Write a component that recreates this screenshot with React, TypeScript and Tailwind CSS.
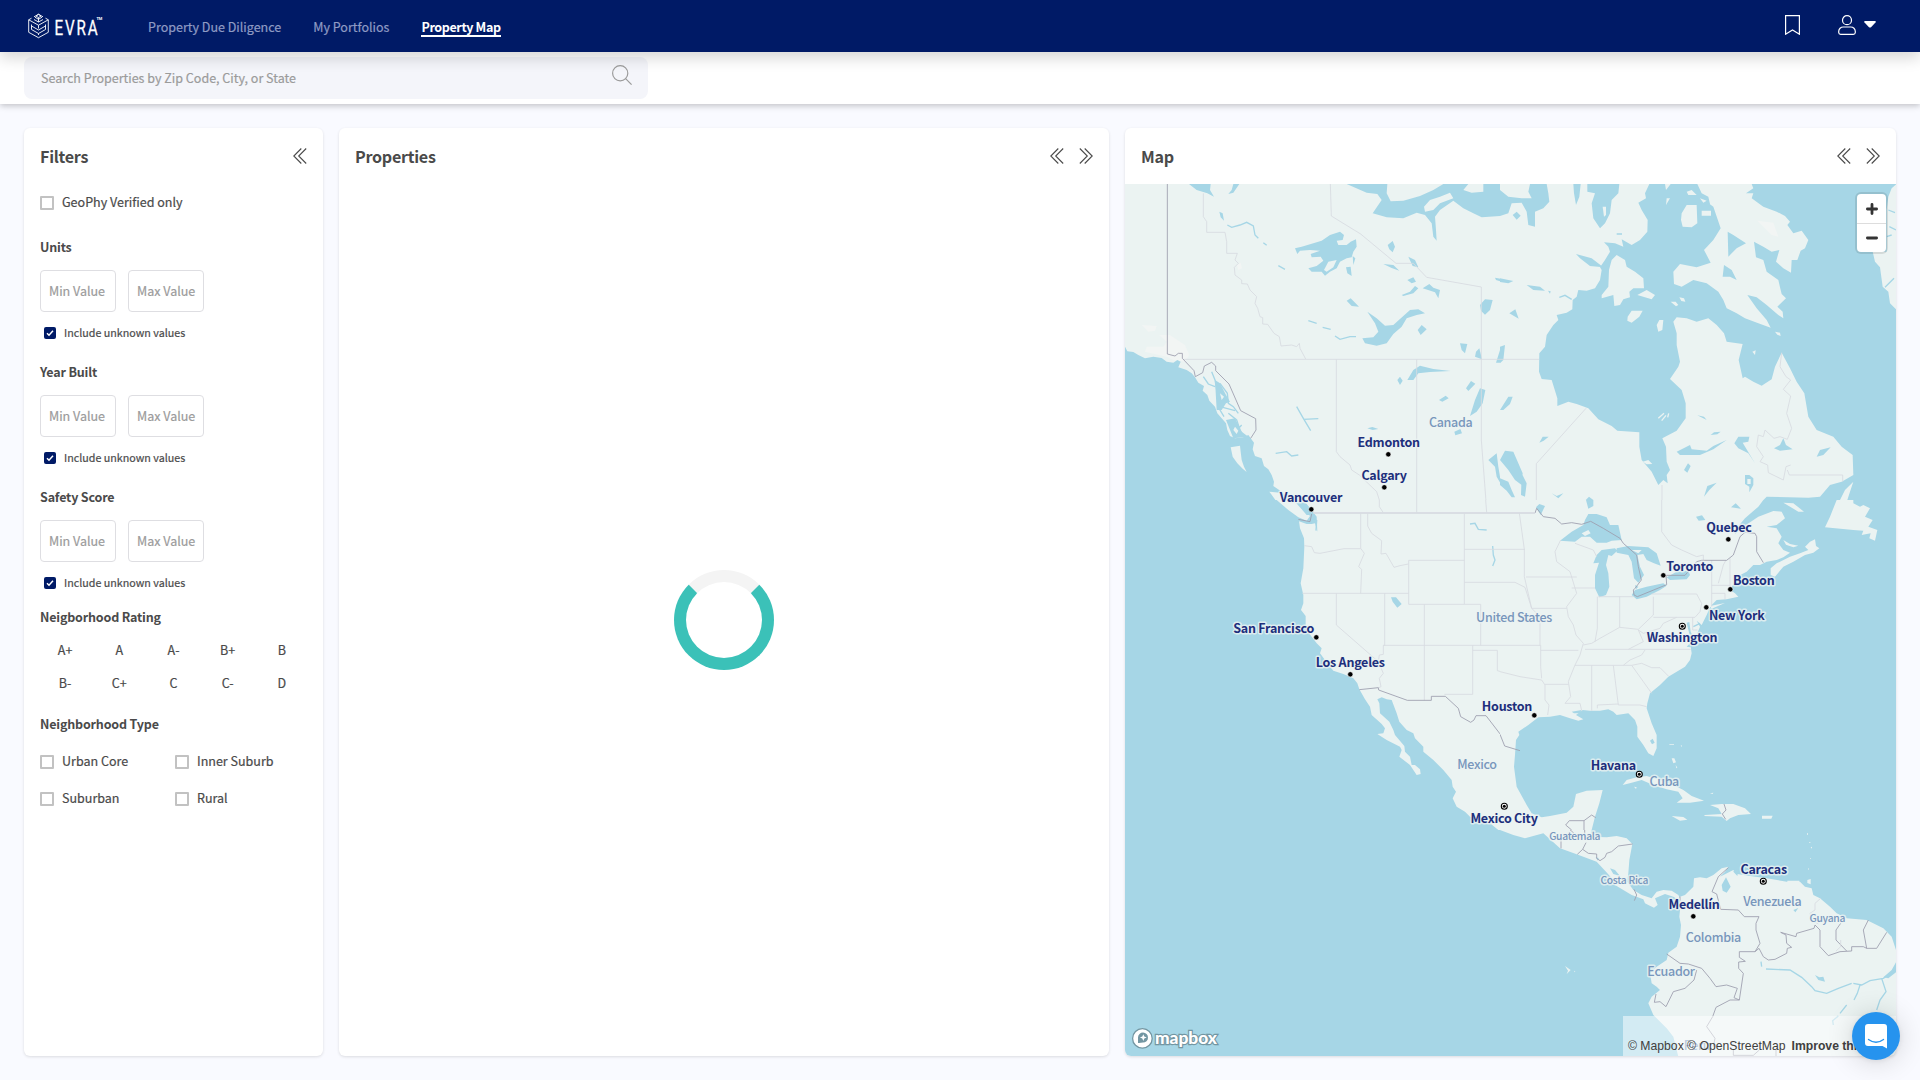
import React from "react";

type Kind = "land" | "water" | "glacier" | "stroke" | "landStroke" | "border" | "state";
type Shape = [Kind, string];

const layerClass: Record<Kind, string> = {
  land: "fill-[#ebf3f2]",
  water: "fill-[#a6d6e6]",
  glacier: "fill-[#f2f5f4]",
  stroke: "fill-none stroke-[#a6d6e6] stroke-[4]",
  landStroke: "fill-none stroke-[#ebf3f2] stroke-[4]",
  border: "fill-none stroke-[#9c9eae] stroke-[2.6]",
  state: "fill-none stroke-[#d8dbe1] stroke-[2.6]",
};

const northWest: Shape[] = [
  ["glacier", "M65 435L110 438 105 452 85 455ZM117 465L150 465 195 495 208 525 195 545 160 540 140 530 75 515 80 500 130 500 140 485ZM350 255L362 248 366 265 355 270Z"],
  ["water", "M0 500L15 500 22 514 40 516 55 525 75 535 100 530 125 534 140 545 160 548 172 540 182 545 175 562 200 570 215 580 225 592 235 608 252 618 248 632 262 645 268 662 285 680 292 700 305 715 318 730 322 750 330 768 345 775 370 772 385 765 402 788 398 808 405 828 425 835 432 858 445 868 455 885 462 905 460 918 485 935 500 950 530 970 560 990 0 990Z"],
  ["stroke", "M275 575L285 600 292 640 300 690 312 710M250 590L265 612 285 620M300 610L322 640 325 670 340 680 355 700M300 680L345 692M325 700L350 720 360 750 375 775M365 735L350 752M290 650L305 662"],
  ["water", "M285 600L300 610 318 645 330 665 318 670 305 690 290 690ZM318 720L345 715 365 755 385 770 340 775Z"],
  ["land", "M332 802L360 797 362 815 365 840 372 860 380 876 368 866 352 850 338 830ZM448 935L480 938 500 955 530 975 545 990 500 990 470 965ZM345 740L355 752 350 762 340 750ZM300 640L312 650 305 660Z"],
  ["water", "M207 12L230 30 262 40 282 50 270 30 272 12ZM340 12L335 30 325 42 340 38 358 12ZM298 95L308 100 312 122 302 112ZM525 205L545 200 580 190 605 182 630 165 660 155 672 165 668 180 650 182 655 195 680 195 692 185 708 178 710 200 700 215 695 232 680 235 660 245 650 265 630 275 615 287 605 275 575 275 565 265 590 258 610 242 602 230 575 232 572 222 600 212 570 210 540 212 532 222ZM678 262L692 260 695 288 682 280ZM698 228L706 235 700 255Z"],
  ["land", "M612 270L625 245 650 240 640 262 620 275Z"],
  ["water", "M680 12L740 38 772 42 785 60 758 100 800 112 850 115 890 98 915 105 935 130 940 170 950 182 948 150 945 110 960 90 1000 62 1030 85 1060 100 1085 112 1140 108 1170 106 1172 90 1200 75 1200 12Z"],
  ["land", "M802 12L970 12 940 30 900 48 850 62 812 64 800 40ZM912 80L930 60 960 50 990 38 1000 55 960 70 940 90 915 95ZM1045 12L1090 12 1090 35 1055 38 1030 30ZM1165 12L1200 12 1200 48 1185 30Z"],
  ["water", "M1175 100L1200 95 1200 117 1185 117ZM803 195L818 183 825 200 818 217 808 208ZM790 252L820 255 838 272 815 264ZM865 230L885 240 895 262 878 258ZM862 300L880 292 888 305 875 310ZM845 345L870 335 885 318 895 325 880 340 850 348ZM908 325L928 312 940 323 960 330 955 355 945 337ZM1080 375L1095 358 1118 360 1110 390 1095 404 1083 392ZM1125 293L1150 298 1180 308 1160 310 1128 300ZM1170 400L1185 390 1195 415 1180 412ZM680 362L692 355 717 380 695 378ZM742 395L770 415 795 437 820 435 850 408 870 390 895 388 915 400 890 405 860 415 845 440 820 462 800 490 770 497 735 490 727 475 760 472 775 455 765 430ZM893 450L905 435 920 448 902 465ZM1020 490L1042 492 1035 520 1025 510ZM1068 515L1078 505 1086 538 1065 530ZM1128 548L1140 510 1158 495 1146 548ZM862 600L880 570 900 557 940 567 992 573 930 576 895 580 880 600ZM832 600L840 590 848 602 840 615ZM1038 625L1053 603 1066 611 1045 633ZM957 660L977 647 986 655 967 665ZM1050 708L1065 660 1080 625 1096 630 1088 670 1070 695ZM1142 685L1160 650 1178 650 1170 675 1150 690ZM742 745L757 741 775 747 758 750ZM1003 755L1021 747 1026 760 1006 766ZM1150 820L1185 808 1200 850 1200 905 1175 870 1155 845ZM1105 840L1130 820 1135 860 1140 890 1165 905 1180 950 1165 945 1150 925 1130 890 1125 860Z"],
  ["stroke", "M322 135L335 142 360 135 380 127 400 138 405 165 415 175M430 188L440 196M475 257L495 268M565 422L590 430M608 442L632 448M645 468L660 478 690 470 708 470M530 680L550 715 572 752M550 718L595 716M467 820L500 815 515 828 535 825"],
  ["state", "M250 40V110L260 125 260 157 315 157 320 185 320 220 352 220 345 240 355 250 343 262 345 285 365 300 365 311 382 312 390 330 410 350 405 370 413 385 420 410 428 413 428 432 443 433 462 460 478 470 483 498 515 495 530 500 538 490 540 505 557 537M190 538H1200M649 538V815L660 830 690 855 695 870 718 885 770 935 778 960 785 990M890 538V990M631 12L634 108 722 162 828 250 880 250 920 292 1084 321V780L1100 990"],
  ["border", "M142 12V522L165 528 175 520 187 520 187 535 222 572 226 590 248 578 253 558 275 547 287 558 287 572 327 612 362 692 407 716 408 750 392 775"],
];

const northEast: Shape[] = [
  ["water", "M448 12L435 40 438 55 415 68 425 90 443 120 442 155 420 180 395 195 365 178 370 200 345 190 312 187 325 200 330 215 315 240 300 262 305 270 300 300 285 325 260 332 235 330 230 350 218 360 217 388 200 398 170 405 175 420 160 435 140 465 135 500 118 520 117 575 125 597 155 600 172 655 172 678 205 665 230 672 265 685 295 718 335 738 352 752 418 757 418 800 425 840 455 875 475 915 490 900 503 910 500 885 510 870 500 845 498 800 487 775 530 752 557 715 557 670 545 630 510 597 535 560 540 545 530 495 530 460 520 425 530 412 560 415 590 425 625 415 650 435 672 460 680 485 728 492 716 540 728 595 735 590 760 605 785 617 815 598 825 560 845 518 870 565 890 605 913 640 925 710 950 750 1000 770 1025 800 1058 825 1060 885 1025 905 990 915 960 950 925 953 800 950 785 965 775 990 1200 990 1200 12Z"],
  ["land", "M570 12L585 35 600 50 640 80 662 145 640 180 612 210 632 248 590 262 540 252 520 275 522 312 545 320 580 300 620 310 655 335 670 360 680 385 710 400 735 415 775 430 812 443 800 420 770 385 742 345 770 352 800 375 835 405 850 415 848 395 832 380 858 355 845 342 840 322 835 300 800 275 790 240 768 232 762 185 790 200 815 215 838 210 828 245 850 265 873 278 875 240 892 240 902 212 915 205 925 180 905 152 880 160 862 135 870 125 855 108 830 95 790 80 755 55 760 40 738 40 760 25 755 12Z"],
  ["water", "M560 12L592 12 605 40 625 50 630 72 600 75 590 50 572 45ZM683 155L700 165 738 190 710 205 685 230ZM672 255L695 270 710 300 690 290 668 290Z"],
  ["glacier", "M772 122L820 128 835 170 815 165Z"],
  ["land", "M545 100L560 75 590 75 592 130 575 142 548 140 543 120ZM605 92H633V107H605ZM350 225L375 240 380 260 405 275 430 295 432 325 400 325 388 335 390 352 370 358 360 375 343 378 340 345 305 355 305 345 325 320 327 270 335 240ZM383 410L395 392 428 392 418 410 395 428 382 422ZM470 435L478 420 490 420 487 450 475 455ZM412 345L440 330 465 345 455 358ZM512 365L527 365 535 375 528 379ZM538 352L552 355 556 365 544 363ZM825 455L840 458 842 468 832 464ZM757 515L767 511 765 525ZM428 845L445 840 457 852 440 853ZM495 12H512L498 30ZM500 55H510L498 75ZM560 35L575 30 590 45 565 45ZM600 55L620 62 610 68ZM1060 905L1050 935 1042 960 1060 978 1085 978 1095 990 1008 990 1020 960 1035 930ZM850 965L880 970 910 990 880 990ZM1190 12L1175 25 1165 50 1160 90 1160 215 1118 215 1125 245 1140 262 1148 320 1165 335 1170 370 1190 390Z"],
  ["landStroke", "M475 715L492 700M485 722L498 706M503 712L506 700"],
  ["water", "M0 30L25 50 65 55 95 55 85 35 90 12 140 12 145 40 148 65 130 85 105 95 105 140 85 135 80 95 65 68 35 70 25 100 0 108ZM38 105L50 95 62 107 50 119ZM220 12H242L238 50 228 75 222 40ZM262 12H358L355 40 335 60 330 100 315 130 300 145 280 115 275 70 285 40 262 35ZM228 222L275 235 310 262 270 258 240 235Z"],
  ["land", "M308 80H318V105L312 110Z"],
  ["water", "M0 295L40 303 25 310 0 306ZM80 315L120 320 135 332 100 330ZM144 332L152 334 150 341ZM28 400L46 388 56 416ZM0 500L15 495 10 540 0 550ZM0 690L25 650 38 650 30 672 10 690ZM118 788L128 770 146 770 131 782ZM0 840L15 812 40 815 55 850 68 880 65 915 45 900 25 870ZM65 880L80 910 75 950 63 945ZM0 895L25 905 35 930 45 952 35 952 20 932 0 915ZM155 940L170 948 190 940 175 955ZM255 962L267 950 280 960 280 980 258 985ZM112 985L120 967 140 982 120 990ZM530 815L570 795 575 808 620 812 640 798 680 780 640 808 600 825 540 825ZM592 706L612 710 620 720ZM632 765L642 757 662 755 652 763ZM703 790L715 770 748 770 745 785 728 788 765 850 745 820 715 805ZM822 805L840 795 850 775 858 795 878 808 840 812ZM950 830L960 810 992 802 970 825ZM552 870L564 850 572 858 562 878ZM612 950L622 918 650 908 628 930ZM693 975L708 965 723 985 693 985ZM735 885H748L760 895V915L748 937V920L735 912Z"],
  ["land", "M742 897H752V912H742Z"],
  ["stroke", "M178 352L195 346 215 358M350 162H366M1155 322L1182 295M1165 90L1185 98M1160 170L1175 165M1168 140L1188 150"],
  ["state", "M0 538H117M258 685L109 851V990M486 915V990M845 518L840 560 858 590 872 600 850 628 872 648 860 700 875 745 862 778 840 770 822 775 795 750 790 770 775 765 770 800 790 830 780 845 803 855 805 878 850 900 858 860 872 855M862 870L868 885H1028V905"],
];

const southWest: Shape[] = [
  ["land", "M540 0L560 12 575 30 590 50 592 95 585 70 575 72 560 72 537 64 540 85 552 115 553 140 550 205 542 250 550 285 550 310 543 330 557 348 557 385 575 410 590 430 605 445 600 460 622 490 640 512 670 522 700 535 712 550 718 568 735 598 750 620 755 645 785 672 795 685 790 700 772 702 800 720 840 740 845 750 838 770 870 795 890 825 902 822 900 808 885 795 875 795 870 770 855 755 853 738 825 705 820 690 808 665 780 640 778 610 772 598 785 592 800 598 815 600 830 640 838 665 860 690 880 700 885 715 910 740 910 755 940 780 970 810 995 840 998 860 1008 875 998 895 1010 920 1035 935 1050 950 1110 970 1135 990 1200 990 1200 890 1190 870 1182 830 1185 770 1200 760V0ZM470 0H530L545 20 570 48 560 62 535 52 505 30Z"],
  ["water", "M1185 710L1200 707V747L1190 735ZM813 292L828 292 845 312 832 323 818 305ZM528 8L548 12 565 35 575 45 560 45Z"],
  ["stroke", "M1050 72L1065 70 1075 88 1100 90M1118 138L1120 165 1125 180 1118 198M575 60L590 62 588 92"],
  ["state", "M722 40V145L733 160 716 200 725 208 722 280M553 137L575 140 583 158 600 160 672 146H722M547 280H866M743 40V78L755 100 785 122 783 162 798 160 822 202 840 197 865 192M866 313V181H1033M1033 40V313H866M1033 148H1200M1033 247H1165L1180 255H1200M649 280V375L775 485M794 280V436H790V463L778 465 775 485 790 520 778 535 783 560 776 563M913 313V601M790 436H1200M1033 313H1082V436M1058 436V583H973M1058 451H1132V512L1160 520 1180 525 1200 527M778 0V20L790 38M890 0V38M1097 0L1100 38"],
  ["border", "M535 58L570 65 575 42M718 569L775 563 776 570 862 601H934V589H976L1015 625 1022 650 1052 667 1062 660 1068 647H1098L1145 708 1154 738 1190 752H1200"],
  ["state", "M580 38H1200M580 39H1200M580 40H1200"],
];

const southEast: Shape[] = [
  ["land", "M0 0H790L775 20 735 55 718 75 700 100 715 90 738 75 775 50 820 33 845 35 855 55 830 75 800 80 830 85 845 110 835 130 850 150 870 158 850 172 830 180 800 185 780 195 760 195 740 215 715 228 708 240 690 270 705 280 715 290 680 298 650 300 632 318 620 345 605 375 590 362 600 380 590 405 570 425 575 460 570 480 555 500 530 515 505 530 480 555 450 580 442 610 440 625 455 670 470 705 470 745 460 768 445 760 430 735 412 710 412 680 405 660 385 640 350 645 340 635 325 628 300 632 270 632 248 630 228 645 250 658 235 662 210 655 180 645 150 650 115 652 85 675 55 695 58 705 48 720 45 765 42 800 50 860 80 915 95 940 125 952 150 948 200 938 220 920 228 882 260 872 308 870 298 910 285 950 275 990H0ZM812 205L830 190 870 170 900 160 925 150 915 140 930 125 945 118 948 138 958 145 940 158 915 165 880 185 850 200 825 230 812 225ZM850 120L870 132 895 137 880 142 858 134ZM850 8L880 10 912 35 895 35ZM1010 0H1060V10L1080 20 1090 15 1110 25 1095 50 1118 60 1105 80 1132 90 1125 122 1108 115 1112 100 1085 105 1090 92 1060 90 975 82 990 50ZM630 318L675 309 635 326Z"],
  ["water", "M180 122L215 95 250 75 255 60 265 42 290 42 320 52 330 75 355 75 365 120 335 122 320 128 290 128 270 110 245 110 225 125ZM280 190L290 165 305 150 345 145 352 152 335 168 325 165 318 195 325 220 328 260 318 285 298 292 285 265 285 225 297 188ZM350 145L385 138 445 142 470 160 482 197 462 190 440 180 430 162 412 165 420 200 432 225 415 248 402 235 395 185 385 165 350 158ZM395 285L405 270 440 260 490 250 500 257 480 270 440 290 410 298ZM500 232L530 215 565 212 570 225 560 238 510 240ZM405 255L415 260 408 268ZM450 722L458 716 464 728 456 733ZM258 0H280V18L265 26ZM108 22L118 12 135 18 122 45ZM588 50L606 46 616 60 596 62ZM693 22L707 10 723 26ZM560 368L568 366 572 395 580 412 570 410ZM570 430L560 440 572 442ZM215 635L245 630 240 640 222 640Z"],
  ["land", "M245 100L265 90 272 100 255 108ZM395 150L425 150 415 160Z"],
  ["stroke", "M705 100L738 68M600 370L580 380"],
  ["land", "M368 855L380 840 410 832 440 828 480 840 520 855 550 870 575 888 612 902 570 908 530 908 548 895 535 875 500 868 460 855 425 840 395 848ZM402 860L410 862 408 867ZM515 775H523L528 787 520 790ZM527 795L532 803 529 805ZM508 732H522V734H508ZM542 735L546 737 545 742ZM630 880L640 878 638 882ZM630 915L665 912 700 912 735 925 753 942 715 945 690 955 680 963 665 950 612 948 615 945 665 942 655 925ZM515 948L550 951 562 959 540 962ZM786 947H818L814 956H786Z"],
  ["state", "M0 148H75M58 39L73 148V230L95 325H200M78 231H230M0 247H45L75 262 95 325 120 350V436M0 436H122M122 451H235M122 436V500L125 535M0 515L60 530 125 540 135 555V600L147 615 143 645M135 553H205M182 120L165 155 170 185 210 215 230 280 200 320 205 350 220 375 228 405 250 430 240 465 225 495 205 545 212 590 195 610H240L245 632M215 264H285M292 290V385L285 425M295 290H400M359 290V382L300 415 275 430 250 435M359 382L415 388 460 345V290M455 282H590L605 310M460 352H585M255 448H572M225 496H395M275 496V632M340 496L355 615H420L440 620M292 625V615L355 612M435 450L425 465 390 480 370 496M395 496L425 490 455 503 480 503 505 528M395 496L430 545 455 580M385 448L430 425 415 390 430 400 480 385 490 370 530 352M578 352V390H592M605 310L600 335 585 352M635 180V320M690 175V275M655 250L670 195 678 180M635 256H690M635 280H675V298M485 0V95L515 135 545 150 590 170 610 165V180M225 130L280 150 290 170"],
  ["border", "M105 39L110 25 130 50 165 55 185 72 215 68 245 73 272 64 310 85 360 115 370 130 410 165 415 200 424 240 405 265 400 270 402 285 412 290 500 254 498 226H555L590 185 605 181H680L700 165 720 110 735 97 765 100 770 110V155L790 188M0 703L14 738 60 752M197 975L208 962H252V990M197 975L215 990M252 962L275 945 287 953M672 912L678 930 667 942 677 958"],
  ["state", "M0 38H105M0 39H105M0 40H105"],
];

const farSouthWest: Shape[] = [
  ["land", "M970 0L995 35 1008 65 998 85 1012 112 1035 125 1060 150 1110 162 1160 185 1185 198H1200V0Z"],
];

const farSouthEast: Shape[] = [
  ["land", "M0 0H42L50 55 80 105 95 130 125 142 200 130 220 110 228 72 260 62 308 58 298 100 285 140 275 180 272 200 320 202 350 198 380 205 397 222 388 270 385 310 382 335 400 360 425 375 455 385 470 365 490 360 515 362 535 375 545 395 520 380 495 372 465 385 473 405 462 413 445 405 435 400 430 388 395 375 345 345 340 330 318 305 290 275 230 253 180 235 130 190 75 205 40 195 0 180ZM540 380L555 375 580 350 582 325 600 322 620 325 640 315 665 295 685 290 675 305 660 320 700 300 712 312 750 318 800 325 860 335 900 335 915 350 935 355 940 375 960 385 990 410 1010 430 1040 445 1100 450 1150 475 1175 500 1188 540V860H535L520 800 500 775 460 735 445 700 455 680 480 660 470 650 455 640 450 610 470 590 500 570 505 548 530 530 540 500 543 465 538 440 540 420ZM922 330L932 327V343L922 339ZM862 332H898V335H862ZM195 588L212 600 200 612 204 602ZM222 602L226 604 224 607ZM912 167H915V170H912ZM921 190H924V194H921ZM928 216H931V219H928ZM932 232L936 230V236ZM931 264H933V267H931ZM924 295H926V299H924Z"],
  ["water", "M665 345L678 322 692 350 680 368 668 362ZM330 295L345 300 360 318 340 312ZM880 420L895 414 886 427ZM945 615L958 622 970 620 975 635 955 630ZM1150 622L1175 600 1190 573V605L1165 625ZM705 295L715 300 712 318 700 305ZM287 262L296 264 294 272Z"],
  ["stroke", "M783 575L785 590M798 597L870 600 905 622 935 650 945 662 980 670 1015 655 1055 640M1060 640L1085 645 1110 632 1150 625 1188 600M1145 625L1158 665 1140 690 1130 720M1080 645L1072 670 1062 690M1040 705L1020 730M1015 738L998 752 1000 765"],
  ["border", "M183 205V235M232 253L248 238 265 250 290 252V265L300 272 315 262 320 250 335 245 355 228 398 222M248 238L258 218M254 180V205M200 170L222 190M402 358L410 375 403 392M540 380V392M685 293L655 320 636 365 650 372 662 418 715 420 733 440H777L768 460V480L780 520 765 545H718V562L736 574 716 576V595L730 610 718 690 702 683 712 655 680 645 648 650 630 625 605 595 565 582 540 580 500 552M590 600L582 630 555 655 520 665 498 710 480 695 463 697 468 672M718 690H690L648 712 638 740 620 770 645 805 640 830M765 545L777 535 790 560 805 570 825 568 860 550 862 535 875 532 860 520 858 495 842 487 888 500 890 490 942 475 945 465 960 480V530L985 557 1020 545 1055 543V530L1090 530 1100 535H1130L1160 487M1022 460L1008 480V510L1040 543M1105 450L1090 480 1100 535M700 840V856H760L778 840M828 840V860"],
  ["state", "M962 385L945 400V420L930 430 935 450 955 462M1022 510V530L1008 543"],
];

interface TileProps { x: number; y: number; w: number; h: number; land?: boolean; shapes: Shape[] }

// One map tile; shapes are drawn at three units per pixel.
function Tile({ x, y, w, h, land, shapes }: TileProps) {
  return (
    <svg x={x} y={y} width={w} height={h} viewBox={`0 0 ${w * 3} ${h * 3}`}>
      <rect width={w * 3} height={h * 3} className={land ? "fill-[#ebf3f2]" : "fill-[#a6d6e6]"} />
      {shapes.map(([kind, d], i) => (
        <path key={i} d={d} className={layerClass[kind]} />
      ))}
    </svg>
  );
}

const cities: [string, number, number][] = [
  ["Edmonton", 1388.7, 447], ["Calgary", 1384, 480], ["Vancouver", 1311, 502.4],
  ["San Francisco", 1273.7, 633.4], ["Los Angeles", 1350.3, 667.4], ["Houston", 1507, 711],
  ["Mexico City", 1504, 823], ["Quebec", 1729, 532], ["Toronto", 1689.7, 571],
  ["Boston", 1753.7, 585], ["New York", 1736.7, 620], ["Washington", 1682, 642],
  ["Havana", 1613.3, 770], ["Caracas", 1763.7, 873.6], ["Medellín", 1694, 909],
];
const countries: [string, number, number][] = [
  ["Canada", 1450.7, 427], ["United States", 1514, 622], ["Mexico", 1477, 769],
  ["Cuba", 1664.3, 786], ["Venezuela", 1772.3, 906], ["Colombia", 1713.3, 942.3], ["Ecuador", 1671, 976.3],
  ["Peru", 1697, 1050],
];
const smallCountries: [string, number, number][] = [
  ["Guatemala", 1574.7, 840], ["Costa Rica", 1624.3, 884.4], ["Guyana", 1827.3, 922],
];
const dots = [
  [1388.3, 454.3], [1384.3, 487.3], [1311.3, 509.3], [1316.3, 637.3], [1350.3, 674.3], [1534.3, 715.3],
  [1728.3, 539.3], [1663.3, 575.3], [1730.3, 589.3], [1706.3, 607.3], [1693.3, 916.3],
];
const capitals = [[1682.3, 626.3], [1639.3, 774.3], [1504.3, 806.3], [1763.3, 881.3]];

const halo = "[paint-order:stroke] stroke-[3] stroke-[#ebf3f2]/80 [stroke-linejoin:round] [-webkit-text-stroke-width:initial]";

function MapView() {
  return (
    <svg viewBox="1125 184 771 872" className="block h-[872px] w-[771px]" textAnchor="middle">
      <Tile x={1120} y={180} w={400} h={330} land shapes={northWest} />
      <Tile x={1500} y={180} w={400} h={330} land shapes={northEast} />
      <Tile x={1120} y={770} w={400} h={310} shapes={farSouthWest} />
      <Tile x={1500} y={770} w={420} h={310} shapes={farSouthEast} />
      <Tile x={1120} y={500} w={400} h={330} shapes={southWest} />
      <Tile x={1500} y={500} w={400} h={330} shapes={southEast} />
      <g className={"fill-[#7896bc] text-[12.5px] font-medium tracking-[-0.3px] " + halo}>
        {countries.map(([n, x, y]) => <text key={n} x={x} y={y}>{n}</text>)}
      </g>
      <g className={"fill-[#7896bc] text-[10.3px] font-medium tracking-[-0.3px] " + halo}>
        {smallCountries.map(([n, x, y]) => <text key={n} x={x} y={y}>{n}</text>)}
      </g>
      {dots.map(([x, y]) => (
        <circle key={x} cx={x} cy={y} r="2.6" className="fill-black stroke-white/70 stroke-[0.8]" />
      ))}
      {capitals.map(([x, y]) => (
        <g key={x}>
          <circle cx={x} cy={y} r="3" className="fill-white stroke-black stroke-[1.1]" />
          <circle cx={x} cy={y} r="1.5" className="fill-black" />
        </g>
      ))}
      <g className={"fill-[#1d2f7c] text-[12.5px] font-bold tracking-[-0.25px] " + halo}>
        {cities.map(([n, x, y]) => <text key={n} x={x} y={y}>{n}</text>)}
      </g>
      <g>
        <circle cx="1142.4" cy="1038.4" r="9.8" className="fill-white stroke-[#7396a2] stroke-[1.3]" />
        <path d="M1138 1043V1037.5A5 5 0 1 1 1143 1042.6Q1140 1043.2 1138 1043Z" className="fill-[#7396a2]" />
        <path d="M1143.3 1034.2L1144.3 1036.6 1146.7 1037.6 1144.3 1038.6 1143.3 1041 1142.3 1038.6 1139.9 1037.6 1142.3 1036.6Z" className="fill-white" />
        <text x="1155" y="1043.5" textAnchor="start" textLength="62" lengthAdjust="spacingAndGlyphs" className="fill-white stroke-[#7396a2] stroke-[2.4] text-[17.5px] font-black [font-family:Lato,sans-serif] [paint-order:stroke]">mapbox</text>
      </g>
    </svg>
  );
}

function Chevrons({ right }: { right?: boolean }) {
  return (
    <svg viewBox="0 0 14 16" className={right ? "h-4 w-3.5 rotate-180" : "h-4 w-3.5"} fill="none" stroke="#4a4a4a" strokeWidth="1.1">
      <path d="M8.3 .5L.8 8 8.3 15.5M13.2 .5L5.7 8 13.2 15.5" />
    </svg>
  );
}

function PanelHeader({ title, both }: { title: string; both?: boolean }) {
  return (
    <div className="flex h-14 items-center justify-between px-4">
      <h2 className="pt-px text-[16.1px] font-bold tracking-[-0.27px] text-[#4a4a4a]">{title}</h2>
      <div className="flex gap-[15px]">
        <Chevrons />
        {both && <Chevrons right />}
      </div>
    </div>
  );
}

function Check({ label }: { label: string }) {
  return (
    <label className="flex items-center gap-2 [-webkit-text-stroke:0.2px]">
      <span className="size-3.5 rounded-[1px] border-2 border-[#c2c2c2]" />
      <span className="pb-0.5">{label}</span>
    </label>
  );
}

function RangeFilter({ title }: { title: string }) {
  return (
    <section className="mb-[17px]">
      <h3 className="h-6 leading-6 font-bold tracking-[-0.18px]">{title}</h3>
      <div className="mt-[11px] flex gap-3 text-[#9b9b9b] [-webkit-text-stroke:0.2px]">
        <div className="flex h-[42px] w-[76px] items-center rounded border border-[#dedee2] pl-2">Min Value</div>
        <div className="flex h-[42px] w-[76px] items-center rounded border border-[#dedee2] pl-2">Max Value</div>
      </div>
      <label className="mt-[11px] flex h-5 items-center gap-2 pl-1 text-[10.74px] [-webkit-text-stroke:0.2px]">
        <span className="flex size-3 items-center justify-center rounded-[2px] bg-[#001a66]">
          <svg viewBox="0 0 8 8" className="size-2" fill="none" stroke="#fff" strokeWidth="1.5"><path d="M1 4.2L3 6.2 7 1.8" /></svg>
        </span>
        <span className="leading-5">Include unknown values</span>
      </label>
    </section>
  );
}

export default function App() {
  return (
    <div className="flex h-[1080px] w-[1920px] flex-col overflow-hidden bg-[#f9faff] text-[12.53px] text-[#4a4a4a] [font-family:'Noto_Sans_CJK_SC',sans-serif]">
      <header className="relative z-20 flex h-[52px] shrink-0 items-center bg-[#001a66] pl-7 shadow-[0_6px_14px_rgba(0,0,0,0.16)]">
        <svg viewBox="28 13 76 26" className="h-[26px] w-[76px] overflow-visible" fill="none" stroke="#fff" strokeWidth=".9">
          <path d="M38.5 14.3L43 16.8M34 16.8L38.5 14.3M31.5 18.2L28.7 19.8V32.3L38.5 37.7 48.3 32.3V19.8L45.5 18.2M28.7 19.8L38.5 25.2 48.3 19.8M38.5 25.2V28.5M31.5 24.5V29.5L38.5 33.5 45.5 29.5V24.5M31.5 26L38.5 30 45.5 26M38.5 33.5V35" />
          <path d="M38.5 14.3L41 16 38.5 17.6 36 16ZM35 17.2L38.5 19.3 42 17.2M34 19.5L38.5 22 43 19.5M38.5 17.6V22" />
          <text transform="translate(54.4 34.8) scale(.74 1)" fill="#fff" stroke="#fff" strokeWidth=".3" className="text-[20.5px] tracking-[2.6px] [font-family:Roboto,sans-serif]">EVRA</text>
          <text x="96.4" y="20.3" fill="#fff" stroke="none" className="text-[4px] font-bold [font-family:Roboto,sans-serif]">TM</text>
        </svg>
        <nav className="ml-11 flex gap-8 pt-0.5 text-[#8f9bc4]">
          <a className="[-webkit-text-stroke:0.2px]">Property Due Diligence</a>
          <a className="[-webkit-text-stroke:0.2px]">My Portfolios</a>
          <a className="relative font-bold tracking-[-0.38px] text-white after:absolute after:inset-x-0 after:top-[17.5px] after:h-0.5 after:bg-white">Property Map</a>
        </nav>
        <div className="mr-11 mb-[3px] ml-auto flex items-center">
          <svg viewBox="0 0 15 20" className="h-5 w-[15px]" fill="none" stroke="#fff" strokeWidth="1.2"><path d="M.6 .6H14.4V19.2L7.5 15 .6 19.2Z" /></svg>
          <svg viewBox="0 0 18 20" className="ml-[38px] h-5 w-[18px]" fill="none" stroke="#fff" strokeWidth="1.2"><circle cx="9" cy="5.2" r="4.5" /><path d="M5.3 12H12.7A4.5 4.5 0 0 1 17.3 16.5V17.5A2 2 0 0 1 15.3 19.4H2.7A2 2 0 0 1 .7 17.5V16.5A4.5 4.5 0 0 1 5.3 12Z" /></svg>
          <svg viewBox="0 0 12 7" className="ml-2 h-[7px] w-3" fill="#fff"><path d="M1 0H11Q12.3 .3 11.5 1.4L7 6.2Q6 7 5 6.2L.5 1.4Q-.3 .3 1 0Z" /></svg>
        </div>
      </header>

      <div className="relative z-10 flex h-[52px] shrink-0 items-center bg-white px-6 shadow-[0_2px_6px_rgba(0,0,0,0.22)]">
        <div className="flex h-[42px] w-[624px] items-center justify-between rounded-lg bg-[#f4f5fa] pr-4 pl-[17px] text-[#9b9b9b]">
          <span className="[-webkit-text-stroke:0.2px]">Search Properties by Zip Code, City, or State</span>
          <svg viewBox="0 0 20 20" className="mb-1.5 size-5" fill="none" stroke="#9b9b9b" strokeWidth="1.2"><circle cx="8.2" cy="8.2" r="7.6" /><path d="M13.6 13.6L19.6 19.6" /></svg>
        </div>
      </div>

      <main className="flex gap-4 px-6 pt-6">
        <aside className="h-[928px] w-[299px] rounded-md bg-white shadow-[0_1px_3px_rgba(0,0,0,0.12)]">
          <PanelHeader title="Filters" />
          <div className="px-4">
            <div className="flex h-[38px] items-center"><Check label="GeoPhy Verified only" /></div>
            <div className="mt-[13px]">
              <RangeFilter title="Units" />
              <RangeFilter title="Year Built" />
              <RangeFilter title="Safety Score" />
            </div>
            <h3 className="-mt-[5px] h-6 leading-6 font-bold tracking-[-0.18px]">Neigborhood Rating</h3>
            <div className="mt-[5px] -ml-0.5 grid w-[271px] auto-rows-[33px] grid-cols-5 place-items-center [-webkit-text-stroke:0.2px]">
              {["A+", "A", "A-", "B+", "B", "B-", "C+", "C", "C-", "D"].map((r) => <span key={r}>{r}</span>)}
            </div>
            <h3 className="mt-3 h-6 leading-6 font-bold tracking-[-0.18px]">Neighborhood Type</h3>
            <div className="mt-2 grid auto-rows-[37px] grid-cols-[135px_1fr] items-center">
              <Check label="Urban Core" />
              <Check label="Inner Suburb" />
              <Check label="Suburban" />
              <Check label="Rural" />
            </div>
          </div>
        </aside>

        <section className="flex h-[928px] w-[770px] flex-col rounded-md bg-white shadow-[0_1px_3px_rgba(0,0,0,0.12)]">
          <PanelHeader title="Properties" both />
          <div className="flex flex-1 items-center justify-center">
            <div className="size-[100px] rounded-full border-[12px] border-[#3bc1b8] border-t-[#f4f4f4]" />
          </div>
        </section>

        <section className="relative h-[928px] w-[771px] overflow-hidden rounded-md bg-white shadow-[0_1px_3px_rgba(0,0,0,0.12)]">
          <PanelHeader title="Map" both />
          <MapView />
          <div className="absolute top-[66px] right-[10px] flex w-[29px] flex-col rounded bg-white shadow-[0_0_0_2px_rgba(0,0,0,0.1)]">
            <span className="flex h-[29px] items-center justify-center"><svg viewBox="0 0 12 12" className="size-3" stroke="#333" strokeWidth="2.8" strokeLinecap="round"><path d="M6 1.4V10.6M1.4 6H10.6" /></svg></span>
            <span className="flex h-[29px] items-center justify-center border-t border-[#ddd]"><svg viewBox="0 0 12 12" className="size-3" stroke="#333" strokeWidth="2.8" strokeLinecap="round"><path d="M1.4 6H10.6" /></svg></span>
          </div>
          <div className="absolute right-0 bottom-0 flex h-10 w-[273px] items-end bg-white/50 pb-px pl-[5px] text-[12.2px] whitespace-nowrap text-[#404040] [font-family:'Liberation_Sans',sans-serif]">
            <span>© Mapbox © OpenStreetMap</span>
            <b className="ml-1.5">Improve this map</b>
          </div>
        </section>
      </main>

      <div className="fixed right-5 bottom-5 z-30 flex size-12 items-center justify-center rounded-full bg-[#2693ee] shadow-[0_1px_6px_rgba(0,0,0,0.08),0_2px_28px_rgba(0,0,0,0.16)]">
        <svg viewBox="0 0 22 25" className="h-[25px] w-[22px]"><path d="M3 0H19Q22 0 22 3V24.5L17.5 22H3Q0 22 0 19V3Q0 0 3 0Z" fill="#fff" /><path d="M3.5 15.5Q11 21 18.5 15.5" fill="none" stroke="#2693ee" strokeWidth="1.4" strokeLinecap="round" /></svg>
      </div>
    </div>
  );
}
